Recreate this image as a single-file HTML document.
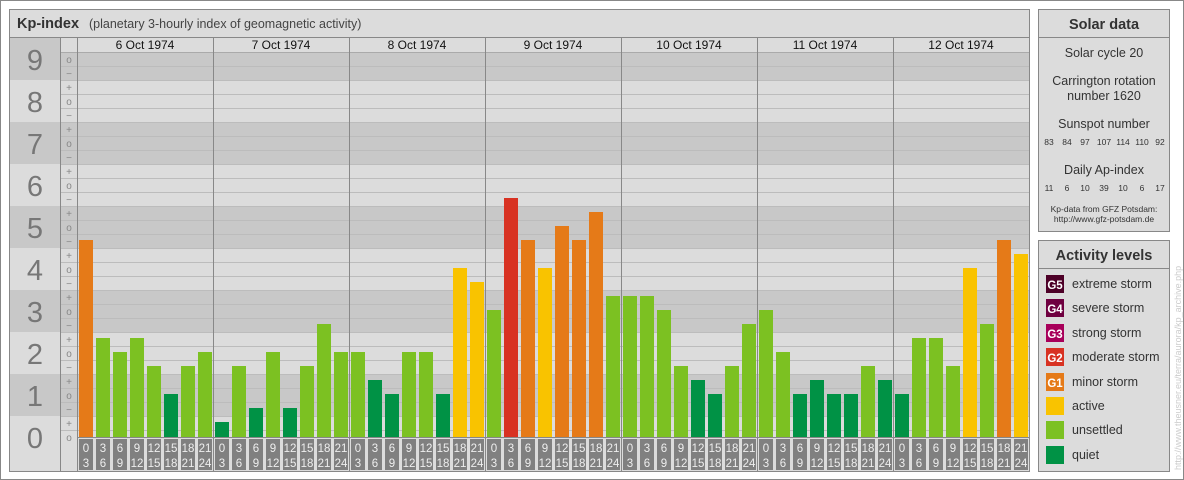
<!DOCTYPE html>
<html><head><meta charset="utf-8"><style>
html,body{margin:0;padding:0;background:#fff;}
svg{display:block;font-family:"Liberation Sans",sans-serif;}
</style></head><body>
<svg width="1184" height="480" viewBox="0 0 1184 480" xmlns="http://www.w3.org/2000/svg">
<rect x="0.5" y="0.5" width="1183" height="479" fill="#fff" stroke="#888"/>
<!-- main panel -->
<rect x="9.5" y="9.5" width="1020" height="462" fill="#dcdcdc" stroke="#888"/>
<line x1="9" y1="37.5" x2="1030" y2="37.5" stroke="#888"/>
<text x="17" y="28" font-size="14.5" font-weight="bold" fill="#333">Kp-index</text>
<text x="89" y="28" font-size="12.5" fill="#444">(planetary 3-hourly index of geomagnetic activity)</text>
<!-- bands in number + chart -->
<g fill="#c8c8c8">
<rect x="10" y="38" width="50" height="42"/><rect x="60" y="52" width="969" height="28"/>
<rect x="10" y="122" width="1019" height="42"/>
<rect x="10" y="206" width="1019" height="42"/>
<rect x="10" y="290" width="1019" height="42"/>
<rect x="10" y="374" width="1019" height="42"/>
</g>
<g stroke="#bcbcbc" stroke-width="1">
<path d="M60 66.5H1029M60 80.5H1029M60 94.5H1029M60 108.5H1029M60 122.5H1029M60 136.5H1029M60 150.5H1029M60 164.5H1029M60 178.5H1029M60 192.5H1029M60 206.5H1029M60 220.5H1029M60 234.5H1029M60 248.5H1029M60 262.5H1029M60 276.5H1029M60 290.5H1029M60 304.5H1029M60 318.5H1029M60 332.5H1029M60 346.5H1029M60 360.5H1029M60 374.5H1029M60 388.5H1029M60 402.5H1029M60 416.5H1029M60 430.5H1029"/>
</g>
<line x1="60" y1="52.5" x2="1029" y2="52.5" stroke="#aaa"/>
<!-- vertical lines -->
<g stroke="#888">
<path d="M60.5 38V471M77.5 38V471M213.5 38V471M349.5 38V471M485.5 38V471M621.5 38V471M757.5 38V471M893.5 38V471"/>
</g>
<!-- numbers -->
<g font-size="29" fill="#777" text-anchor="middle">
<text x="35" y="70">9</text><text x="35" y="112">8</text><text x="35" y="154">7</text><text x="35" y="196">6</text><text x="35" y="238">5</text><text x="35" y="280">4</text><text x="35" y="322">3</text><text x="35" y="364">2</text><text x="35" y="406">1</text><text x="35" y="448">0</text>
</g>
<!-- signs -->
<g font-size="10" fill="#888" text-anchor="middle">
<text x="69" y="63">o</text><text x="69" y="77">−</text>
<text x="69" y="91">+</text><text x="69" y="105">o</text><text x="69" y="119">−</text>
<text x="69" y="133">+</text><text x="69" y="147">o</text><text x="69" y="161">−</text>
<text x="69" y="175">+</text><text x="69" y="189">o</text><text x="69" y="203">−</text>
<text x="69" y="217">+</text><text x="69" y="231">o</text><text x="69" y="245">−</text>
<text x="69" y="259">+</text><text x="69" y="273">o</text><text x="69" y="287">−</text>
<text x="69" y="301">+</text><text x="69" y="315">o</text><text x="69" y="329">−</text>
<text x="69" y="343">+</text><text x="69" y="357">o</text><text x="69" y="371">−</text>
<text x="69" y="385">+</text><text x="69" y="399">o</text><text x="69" y="413">−</text>
<text x="69" y="427">+</text><text x="69" y="441">o</text>
</g>
<!-- dates -->
<g font-size="12" fill="#111" text-anchor="middle">
<text x="145" y="49">6 Oct 1974</text><text x="281" y="49">7 Oct 1974</text><text x="417" y="49">8 Oct 1974</text><text x="553" y="49">9 Oct 1974</text><text x="689" y="49">10 Oct 1974</text><text x="825" y="49">11 Oct 1974</text><text x="961" y="49">12 Oct 1974</text>
</g>
<!-- bars -->
<g>
<rect x="79" y="240" width="14" height="197" fill="#e57a18"/>
<rect x="96" y="338" width="14" height="99" fill="#7cc122"/>
<rect x="113" y="352" width="14" height="85" fill="#7cc122"/>
<rect x="130" y="338" width="14" height="99" fill="#7cc122"/>
<rect x="147" y="366" width="14" height="71" fill="#7cc122"/>
<rect x="164" y="394" width="14" height="43" fill="#009245"/>
<rect x="181" y="366" width="14" height="71" fill="#7cc122"/>
<rect x="198" y="352" width="14" height="85" fill="#7cc122"/>

<rect x="215" y="422" width="14" height="15" fill="#009245"/>
<rect x="232" y="366" width="14" height="71" fill="#7cc122"/>
<rect x="249" y="408" width="14" height="29" fill="#009245"/>
<rect x="266" y="352" width="14" height="85" fill="#7cc122"/>
<rect x="283" y="408" width="14" height="29" fill="#009245"/>
<rect x="300" y="366" width="14" height="71" fill="#7cc122"/>
<rect x="317" y="324" width="14" height="113" fill="#7cc122"/>
<rect x="334" y="352" width="14" height="85" fill="#7cc122"/>

<rect x="351" y="352" width="14" height="85" fill="#7cc122"/>
<rect x="368" y="380" width="14" height="57" fill="#009245"/>
<rect x="385" y="394" width="14" height="43" fill="#009245"/>
<rect x="402" y="352" width="14" height="85" fill="#7cc122"/>
<rect x="419" y="352" width="14" height="85" fill="#7cc122"/>
<rect x="436" y="394" width="14" height="43" fill="#009245"/>
<rect x="453" y="268" width="14" height="169" fill="#f9c300"/>
<rect x="470" y="282" width="14" height="155" fill="#f9c300"/>

<rect x="487" y="310" width="14" height="127" fill="#7cc122"/>
<rect x="504" y="198" width="14" height="239" fill="#d83222"/>
<rect x="521" y="240" width="14" height="197" fill="#e57a18"/>
<rect x="538" y="268" width="14" height="169" fill="#f9c300"/>
<rect x="555" y="226" width="14" height="211" fill="#e57a18"/>
<rect x="572" y="240" width="14" height="197" fill="#e57a18"/>
<rect x="589" y="212" width="14" height="225" fill="#e57a18"/>
<rect x="606" y="296" width="14" height="141" fill="#7cc122"/>

<rect x="623" y="296" width="14" height="141" fill="#7cc122"/>
<rect x="640" y="296" width="14" height="141" fill="#7cc122"/>
<rect x="657" y="310" width="14" height="127" fill="#7cc122"/>
<rect x="674" y="366" width="14" height="71" fill="#7cc122"/>
<rect x="691" y="380" width="14" height="57" fill="#009245"/>
<rect x="708" y="394" width="14" height="43" fill="#009245"/>
<rect x="725" y="366" width="14" height="71" fill="#7cc122"/>
<rect x="742" y="324" width="14" height="113" fill="#7cc122"/>

<rect x="759" y="310" width="14" height="127" fill="#7cc122"/>
<rect x="776" y="352" width="14" height="85" fill="#7cc122"/>
<rect x="793" y="394" width="14" height="43" fill="#009245"/>
<rect x="810" y="380" width="14" height="57" fill="#009245"/>
<rect x="827" y="394" width="14" height="43" fill="#009245"/>
<rect x="844" y="394" width="14" height="43" fill="#009245"/>
<rect x="861" y="366" width="14" height="71" fill="#7cc122"/>
<rect x="878" y="380" width="14" height="57" fill="#009245"/>

<rect x="895" y="394" width="14" height="43" fill="#009245"/>
<rect x="912" y="338" width="14" height="99" fill="#7cc122"/>
<rect x="929" y="338" width="14" height="99" fill="#7cc122"/>
<rect x="946" y="366" width="14" height="71" fill="#7cc122"/>
<rect x="963" y="268" width="14" height="169" fill="#f9c300"/>
<rect x="980" y="324" width="14" height="113" fill="#7cc122"/>
<rect x="997" y="240" width="14" height="197" fill="#e57a18"/>
<rect x="1014" y="254" width="14" height="183" fill="#f9c300"/>
</g>
<line x1="77" y1="437.5" x2="1029" y2="437.5" stroke="#888"/>
<!-- hour labels -->
<g fill="#808080">
<rect x="79" y="439" width="14" height="31"/><rect x="96" y="439" width="14" height="31"/><rect x="113" y="439" width="14" height="31"/><rect x="130" y="439" width="14" height="31"/><rect x="147" y="439" width="14" height="31"/><rect x="164" y="439" width="14" height="31"/><rect x="181" y="439" width="14" height="31"/><rect x="198" y="439" width="14" height="31"/>
<rect x="215" y="439" width="14" height="31"/><rect x="232" y="439" width="14" height="31"/><rect x="249" y="439" width="14" height="31"/><rect x="266" y="439" width="14" height="31"/><rect x="283" y="439" width="14" height="31"/><rect x="300" y="439" width="14" height="31"/><rect x="317" y="439" width="14" height="31"/><rect x="334" y="439" width="14" height="31"/>
<rect x="351" y="439" width="14" height="31"/><rect x="368" y="439" width="14" height="31"/><rect x="385" y="439" width="14" height="31"/><rect x="402" y="439" width="14" height="31"/><rect x="419" y="439" width="14" height="31"/><rect x="436" y="439" width="14" height="31"/><rect x="453" y="439" width="14" height="31"/><rect x="470" y="439" width="14" height="31"/>
<rect x="487" y="439" width="14" height="31"/><rect x="504" y="439" width="14" height="31"/><rect x="521" y="439" width="14" height="31"/><rect x="538" y="439" width="14" height="31"/><rect x="555" y="439" width="14" height="31"/><rect x="572" y="439" width="14" height="31"/><rect x="589" y="439" width="14" height="31"/><rect x="606" y="439" width="14" height="31"/>
<rect x="623" y="439" width="14" height="31"/><rect x="640" y="439" width="14" height="31"/><rect x="657" y="439" width="14" height="31"/><rect x="674" y="439" width="14" height="31"/><rect x="691" y="439" width="14" height="31"/><rect x="708" y="439" width="14" height="31"/><rect x="725" y="439" width="14" height="31"/><rect x="742" y="439" width="14" height="31"/>
<rect x="759" y="439" width="14" height="31"/><rect x="776" y="439" width="14" height="31"/><rect x="793" y="439" width="14" height="31"/><rect x="810" y="439" width="14" height="31"/><rect x="827" y="439" width="14" height="31"/><rect x="844" y="439" width="14" height="31"/><rect x="861" y="439" width="14" height="31"/><rect x="878" y="439" width="14" height="31"/>
<rect x="895" y="439" width="14" height="31"/><rect x="912" y="439" width="14" height="31"/><rect x="929" y="439" width="14" height="31"/><rect x="946" y="439" width="14" height="31"/><rect x="963" y="439" width="14" height="31"/><rect x="980" y="439" width="14" height="31"/><rect x="997" y="439" width="14" height="31"/><rect x="1014" y="439" width="14" height="31"/>
</g>
<g font-size="11.5" fill="#eee" text-anchor="middle">
<text x="86" y="452">0</text><text x="103" y="452">3</text><text x="120" y="452">6</text><text x="137" y="452">9</text><text x="154" y="452">12</text><text x="171" y="452">15</text><text x="188" y="452">18</text><text x="205" y="452">21</text>
<text x="86" y="467">3</text><text x="103" y="467">6</text><text x="120" y="467">9</text><text x="137" y="467">12</text><text x="154" y="467">15</text><text x="171" y="467">18</text><text x="188" y="467">21</text><text x="205" y="467">24</text>
<text x="222" y="452">0</text><text x="239" y="452">3</text><text x="256" y="452">6</text><text x="273" y="452">9</text><text x="290" y="452">12</text><text x="307" y="452">15</text><text x="324" y="452">18</text><text x="341" y="452">21</text>
<text x="222" y="467">3</text><text x="239" y="467">6</text><text x="256" y="467">9</text><text x="273" y="467">12</text><text x="290" y="467">15</text><text x="307" y="467">18</text><text x="324" y="467">21</text><text x="341" y="467">24</text>
<text x="358" y="452">0</text><text x="375" y="452">3</text><text x="392" y="452">6</text><text x="409" y="452">9</text><text x="426" y="452">12</text><text x="443" y="452">15</text><text x="460" y="452">18</text><text x="477" y="452">21</text>
<text x="358" y="467">3</text><text x="375" y="467">6</text><text x="392" y="467">9</text><text x="409" y="467">12</text><text x="426" y="467">15</text><text x="443" y="467">18</text><text x="460" y="467">21</text><text x="477" y="467">24</text>
<text x="494" y="452">0</text><text x="511" y="452">3</text><text x="528" y="452">6</text><text x="545" y="452">9</text><text x="562" y="452">12</text><text x="579" y="452">15</text><text x="596" y="452">18</text><text x="613" y="452">21</text>
<text x="494" y="467">3</text><text x="511" y="467">6</text><text x="528" y="467">9</text><text x="545" y="467">12</text><text x="562" y="467">15</text><text x="579" y="467">18</text><text x="596" y="467">21</text><text x="613" y="467">24</text>
<text x="630" y="452">0</text><text x="647" y="452">3</text><text x="664" y="452">6</text><text x="681" y="452">9</text><text x="698" y="452">12</text><text x="715" y="452">15</text><text x="732" y="452">18</text><text x="749" y="452">21</text>
<text x="630" y="467">3</text><text x="647" y="467">6</text><text x="664" y="467">9</text><text x="681" y="467">12</text><text x="698" y="467">15</text><text x="715" y="467">18</text><text x="732" y="467">21</text><text x="749" y="467">24</text>
<text x="766" y="452">0</text><text x="783" y="452">3</text><text x="800" y="452">6</text><text x="817" y="452">9</text><text x="834" y="452">12</text><text x="851" y="452">15</text><text x="868" y="452">18</text><text x="885" y="452">21</text>
<text x="766" y="467">3</text><text x="783" y="467">6</text><text x="800" y="467">9</text><text x="817" y="467">12</text><text x="834" y="467">15</text><text x="851" y="467">18</text><text x="868" y="467">21</text><text x="885" y="467">24</text>
<text x="902" y="452">0</text><text x="919" y="452">3</text><text x="936" y="452">6</text><text x="953" y="452">9</text><text x="970" y="452">12</text><text x="987" y="452">15</text><text x="1004" y="452">18</text><text x="1021" y="452">21</text>
<text x="902" y="467">3</text><text x="919" y="467">6</text><text x="936" y="467">9</text><text x="953" y="467">12</text><text x="970" y="467">15</text><text x="987" y="467">18</text><text x="1004" y="467">21</text><text x="1021" y="467">24</text>
</g>
<!-- Solar data panel -->
<rect x="1038.5" y="9.5" width="131" height="222" fill="#dcdcdc" stroke="#888"/>
<line x1="1038" y1="37.5" x2="1170" y2="37.5" stroke="#888"/>
<g text-anchor="middle" fill="#333">
<text x="1104" y="29" font-size="14.5" font-weight="bold">Solar data</text>
<text x="1104" y="57" font-size="12.5">Solar cycle 20</text>
<text x="1104" y="85" font-size="12.5">Carrington rotation</text>
<text x="1104" y="100" font-size="12.5">number 1620</text>
<text x="1104" y="128" font-size="12.5">Sunspot number</text>
<text x="1104" y="174" font-size="12.5">Daily Ap-index</text>
</g>
<g font-size="8.5" fill="#333" text-anchor="middle">
<text x="1049" y="145">83</text><text x="1067" y="145">84</text><text x="1085" y="145">97</text><text x="1104" y="145">107</text><text x="1123" y="145">114</text><text x="1142" y="145">110</text><text x="1160" y="145">92</text>
<text x="1049" y="191">11</text><text x="1067" y="191">6</text><text x="1085" y="191">10</text><text x="1104" y="191">39</text><text x="1123" y="191">10</text><text x="1142" y="191">6</text><text x="1160" y="191">17</text>
<text x="1104" y="212">Kp-data from GFZ Potsdam:</text>
<text x="1104" y="222">http://www.gfz-potsdam.de</text>
</g>
<!-- Activity levels -->
<rect x="1038.5" y="240.5" width="131" height="231" fill="#dcdcdc" stroke="#888"/>
<line x1="1038" y1="268.5" x2="1170" y2="268.5" stroke="#888"/>
<text x="1104" y="260" font-size="14.5" font-weight="bold" fill="#333" text-anchor="middle">Activity levels</text>
<g>
<rect x="1046" y="275" width="18" height="18" fill="#4d0027"/>
<rect x="1046" y="299" width="18" height="18" fill="#6f0040"/>
<rect x="1046" y="324" width="18" height="18" fill="#a8005a"/>
<rect x="1046" y="348" width="18" height="18" fill="#d83222"/>
<rect x="1046" y="373" width="18" height="18" fill="#e57a18"/>
<rect x="1046" y="397" width="18" height="18" fill="#f9c300"/>
<rect x="1046" y="421" width="18" height="18" fill="#7cc122"/>
<rect x="1046" y="446" width="18" height="18" fill="#009245"/>
</g>
<g font-size="11.5" font-weight="bold" fill="#fff" text-anchor="middle">
<text x="1055" y="289">G5</text><text x="1055" y="313">G4</text><text x="1055" y="338">G3</text><text x="1055" y="362">G2</text><text x="1055" y="387">G1</text>
</g>
<g font-size="12.5" fill="#333">
<text x="1072" y="288">extreme storm</text>
<text x="1072" y="312">severe storm</text>
<text x="1072" y="337">strong storm</text>
<text x="1072" y="361">moderate storm</text>
<text x="1072" y="386">minor storm</text>
<text x="1072" y="410">active</text>
<text x="1072" y="434">unsettled</text>
<text x="1072" y="459">quiet</text>
</g>
<text transform="translate(1181,470) rotate(-90)" font-size="9" fill="#ccc">http://www.theusner.eu/terra/aurora/kp_archive.php</text>
</svg>
</body></html>
